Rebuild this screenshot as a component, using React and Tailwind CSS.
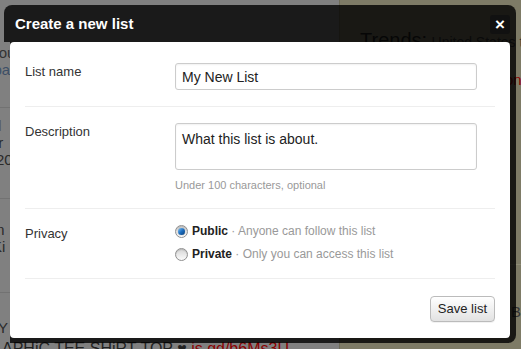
import { useState } from "react"

function Radio({ checked, onClick }) {
  return (
    <span
      onClick={onClick}
      className="relative inline-flex items-center justify-center w-[13px] h-[13px] rounded-full border border-[#8f8f8f] bg-gradient-to-b from-[#d6d6d6] to-[#fbfbfb] shadow-[inset_0_1px_1px_rgba(0,0,0,0.15)] shrink-0 cursor-pointer"
    >
      {checked && (
        <span className="w-[7px] h-[7px] rounded-full bg-gradient-to-br from-[#7cc3f5] via-[#1d6fc0] to-[#0b3f7a] shadow-[0_0_1px_rgba(0,0,0,0.5)]"></span>
      )}
    </span>
  )
}

export default function App() {
  const [name, setName] = useState("My New List")
  const [description, setDescription] = useState("What this list is about.")
  const [privacy, setPrivacy] = useState("public")

  return (
    <div className="relative w-[521px] h-[349px] overflow-hidden font-['Liberation_Sans',Arial,sans-serif]">
      {/* page behind the dialog */}
      <div className="flex h-full">
        <div className="w-[339px] shrink-0 bg-[#808080] text-[#2a2a2a] text-[15px] leading-[17px] pt-[44px]">
          <div className="ml-[-18px] text-[#333]">about</div>
          <div className="ml-[-14px] text-[#3d4f66]">spa</div>
          <div className="border-t border-[#727272] mt-[29px] pt-[9px] ml-[-10px] text-[#555]">ul</div>
          <div className="ml-[-6px]">tr</div>
          <div className="ml-[-4px]">20</div>
          <div className="border-t border-[#727272] mt-[30px] pt-[5px] ml-[-10px] text-[#555]">e</div>
          <div className="ml-[-8px]">m</div>
          <div className="ml-[-8px]">Ki</div>
          <div className="border-t border-[#727272] mt-[37px] pt-[9px] ml-[-10px] text-[#555]">e</div>
          <div className="ml-[-2px]">Y</div>
          <div className="mt-[4px] ml-[2px] text-[16px] whitespace-nowrap">
            <span className="text-[#222]">APHiC TEE SHiRT TOP ♥ </span>
            <span className="text-[#8b0000] underline">is.gd/b6Ms3U</span>
          </div>
        </div>
        <div className="flex-1 min-w-0 overflow-hidden bg-[#7e7b66] border-l border-[#6e6b58] pt-[25px] pl-[20px] text-[#222]">
          <div className="whitespace-nowrap">
            <span className="text-[20px]">Trends:</span>{" "}
            <span className="text-[14px] text-[#333]">United States trends</span>
          </div>
          <div className="ml-[145px] mt-[14px] text-[15px] text-[#8b0000] whitespace-nowrap">on</div>
          <div className="border-t border-[#8e8b76] mt-[172px]"></div>
          <div className="ml-[151px] mt-[36px] text-[15px] text-[#333] whitespace-nowrap">Bl</div>
        </div>
      </div>

      {/* dialog */}
      <div className="absolute left-[4px] top-[5px] w-[512px] h-[338px] flex flex-col">
        <div className="h-[37px] shrink-0 bg-black/80 rounded-t-[8px] flex items-center justify-between pl-[11px] pr-[6px]">
          <h2 className="text-white font-bold text-[15px] leading-[18px]">Create a new list</h2>
          <button className="w-[20px] h-[19px] mt-[1px] rounded-[3px] bg-[#111] text-white font-bold text-[17px] leading-[19px] flex items-center justify-center">
            ×
          </button>
        </div>

        <div className="flex-1 ml-[6px] pr-[6px] pb-[5px] bg-black/80 rounded-br-[8px] flex">
          <div className="flex-1 bg-white rounded-[4px] px-[15px] text-[13px] leading-[18px] text-[#333]">
            <div className="flex pt-[21px] pb-[16px] border-b border-[#eee]">
              <label className="w-[150px]">List name</label>
              <input
                value={name}
                onChange={(e) => setName(e.target.value)}
                className="w-[302px] h-[27px] px-[6px] border border-[#ccc] rounded-[3px] text-[14px] text-[#222] outline-none shadow-[inset_0_1px_2px_rgba(0,0,0,0.06)]"
              />
            </div>

            <div className="flex pt-[16px] pb-[16px] border-b border-[#eee]">
              <label className="w-[150px]">Description</label>
              <div>
                <textarea
                  value={description}
                  onChange={(e) => setDescription(e.target.value)}
                  className="block w-[302px] h-[47px] px-[6px] py-[6px] border border-[#ccc] rounded-[3px] text-[14px] leading-[18px] text-[#222] outline-none resize-none shadow-[inset_0_1px_2px_rgba(0,0,0,0.06)]"
                />
                <p className="mt-[8px] text-[11px] leading-[14px] text-[#999]">Under 100 characters, optional</p>
              </div>
            </div>

            <div className="flex pt-[13px] pb-[15px] border-b border-[#eee]">
              <label className="w-[150px] pt-[3px]">Privacy</label>
              <div className="flex flex-col gap-[5px] text-[12px]">
                <div className="flex items-center gap-[4px] h-[18px]">
                  <Radio checked={privacy === "public"} onClick={() => setPrivacy("public")} />
                  <span>
                    <b className="text-[#222]">Public</b>
                    <span className="text-[#999]"> · Anyone can follow this list</span>
                  </span>
                </div>
                <div className="flex items-center gap-[4px] h-[18px]">
                  <Radio checked={privacy === "private"} onClick={() => setPrivacy("private")} />
                  <span>
                    <b className="text-[#222]">Private</b>
                    <span className="text-[#999]"> · Only you can access this list</span>
                  </span>
                </div>
              </div>
            </div>

            <div className="flex justify-end pt-[17px]">
              <button className="h-[26px] px-[7px] rounded-[4px] border border-[#bbb] bg-gradient-to-b from-white to-[#e2e2e2] text-[13px] text-[#222] shadow-[0_1px_0_rgba(0,0,0,0.05)]">
                Save list
              </button>
            </div>
          </div>
        </div>
      </div>
    </div>
  )
}
